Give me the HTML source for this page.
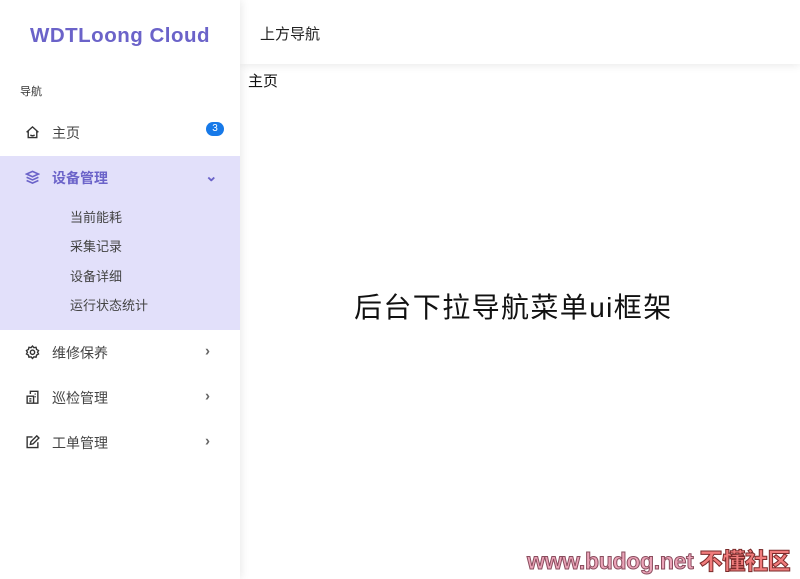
<!DOCTYPE html>
<html><head><meta charset="utf-8"><style>
*{margin:0;padding:0;box-sizing:border-box}
body{width:800px;height:579px;overflow:hidden;background:#fff;font-family:"Liberation Sans","Noto Sans CJK SC",sans-serif;position:relative}
.side{position:absolute;left:0;top:0;width:240px;height:579px;background:#fff;box-shadow:2px 0 8px rgba(0,0,0,.08);z-index:2}
.logo{position:absolute;left:0;width:240px;top:24px;text-align:center;font-weight:bold;font-size:20.5px;color:#6b63c9;letter-spacing:.5px}
.nav{position:absolute;left:20px;top:83px;font-size:11px;color:#333}
.item{position:absolute;left:0;width:240px;height:44px;font-size:14px;color:#444}
.item svg{position:absolute;left:25px;top:50%;transform:translateY(-55%)}
.item .t{position:absolute;left:52px;top:50%;transform:translateY(-50%)}
.item .ar{position:absolute;left:205px;top:50%;transform:translateY(-62%);font-size:15px;font-weight:bold;color:#666}
.open{position:absolute;left:0;top:156px;width:240px;height:174px;background:#e2e0fa}
.sub{position:absolute;left:70px;font-size:13px;color:#444}
.badge{position:absolute;left:206px;top:122px;width:18px;height:14px;border-radius:7px;background:#1779e8;color:#fff;font-size:10px;text-align:center;line-height:14px}
.hdr{position:absolute;left:240px;top:0;width:560px;height:64px;background:#fff;box-shadow:0 2px 8px rgba(0,0,0,.08);z-index:1}
.hdr span{position:absolute;left:20px;top:23px;font-size:15px;color:#222}
.crumb{position:absolute;left:248px;top:70px;font-size:15px;color:#111}
.big{position:absolute;left:354px;top:286px;font-size:28px;color:#111;letter-spacing:1.4px}
.wm{position:absolute;left:527px;top:542px;font-size:23px;font-weight:bold;color:#eba4b8;-webkit-text-stroke:1px #8a4d5e;letter-spacing:-.3px}
.wm b{color:#f07c7c;-webkit-text-stroke:1px #7a2a2a}
</style></head><body>
<div class="side">
<div class="logo">WDTLoong Cloud</div>
<div class="nav">导航</div>
<div class="item" style="top:111px">
<svg width="15" height="15" viewBox="0 0 14 14" fill="none" stroke="#333" stroke-width="1.3"><path d="M1.5 7 7 2l5.5 5M3 6v6h8V6M5 9.5q2 1.5 4 0"/></svg>
<span class="t">主页</span></div>
<div class="badge">3</div>
<div class="open"></div>
<div class="item" style="top:156px;color:#6b63c9;font-weight:bold">
<svg width="15" height="15" viewBox="0 0 14 14" fill="none" stroke="#6b63c9" stroke-width="1.5"><path d="M7 1.5 12.5 4 7 6.5 1.5 4Z M1.5 7 7 9.5 12.5 7 M1.5 10 7 12.5 12.5 10"/></svg>
<span class="t">设备管理</span><span class="ar" style="color:#6b63c9">⌄</span></div>
<div class="sub" style="top:207px">当前能耗</div>
<div class="sub" style="top:236px">采集记录</div>
<div class="sub" style="top:266px">设备详细</div>
<div class="sub" style="top:295px">运行状态统计</div>
<div class="item" style="top:331px">
<svg width="15" height="15" viewBox="0 0 14 14" fill="none" stroke="#333" stroke-width="1.3"><circle cx="7" cy="7" r="2"/><path d="M7 1.2l1.3 1.5 2-.3.5 2 1.8 1-.9 1.6.9 1.6-1.8 1-.5 2-2-.3L7 12.8l-1.3-1.5-2 .3-.5-2-1.8-1 .9-1.6-.9-1.6 1.8-1 .5-2 2 .3z"/></svg>
<span class="t">维修保养</span><span class="ar">›</span></div>
<div class="item" style="top:376px">
<svg width="15" height="15" viewBox="0 0 14 14" fill="none" stroke="#333" stroke-width="1.3"><path d="M5 4V1.5h7v11H2V6h6v6.5M4 8.5h2M4 10.5h2M9 4h1M9 6.5h1"/></svg>
<span class="t">巡检管理</span><span class="ar">›</span></div>
<div class="item" style="top:421px">
<svg width="15" height="15" viewBox="0 0 14 14" fill="none" stroke="#333" stroke-width="1.3"><path d="M7 2H2v10h10V7M5 9l.5-2.5 5.5-5.5 2 2-5.5 5.5z"/></svg>
<span class="t">工单管理</span><span class="ar">›</span></div>
</div>
<div class="hdr"><span>上方导航</span></div>
<div class="crumb">主页</div>
<div class="big">后台下拉导航菜单ui框架</div>
<div class="wm">www.budog.net <b>不懂社区</b></div>
</body></html>
